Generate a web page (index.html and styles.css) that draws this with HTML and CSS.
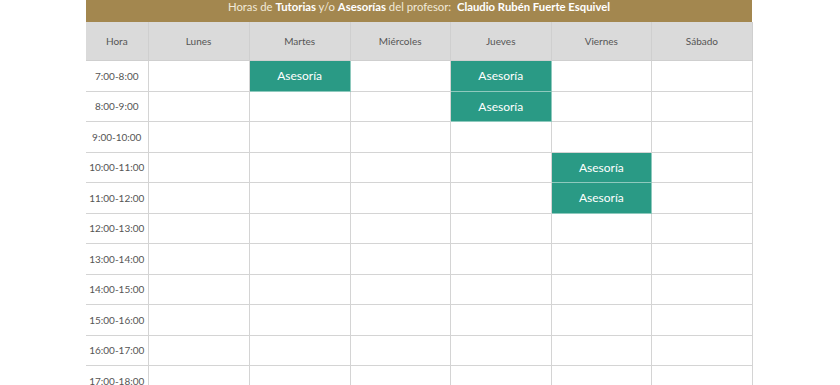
FILE: index.html
```html
<!DOCTYPE html>
<html lang="es">
<head>
<meta charset="utf-8">
<title>Horario</title>
<link rel="stylesheet" href="styles.css">
</head>
<body>
<div class="wrap">
  <div class="title">Horas de <b>Tutorias</b> y/o <b>Asesorías</b> del profesor: &nbsp;<b>Claudio Rubén Fuerte Esquivel</b></div>
  <table class="sched">
    <colgroup>
      <col class="c-hora"><col class="c-d1"><col class="c-d1"><col class="c-d2"><col class="c-d1"><col class="c-d2"><col class="c-d1">
    </colgroup>
    <thead>
      <tr><th>Hora</th><th>Lunes</th><th>Martes</th><th>Miércoles</th><th>Jueves</th><th>Viernes</th><th>Sábado</th></tr>
    </thead>
    <tbody>
      <tr><td class="h">7:00-8:00</td><td></td><td class="a">Asesoría</td><td></td><td class="a">Asesoría</td><td></td><td></td></tr>
      <tr><td class="h">8:00-9:00</td><td></td><td></td><td></td><td class="a">Asesoría</td><td></td><td></td></tr>
      <tr><td class="h">9:00-10:00</td><td></td><td></td><td></td><td></td><td></td><td></td></tr>
      <tr><td class="h">10:00-11:00</td><td></td><td></td><td></td><td></td><td class="a">Asesoría</td><td></td></tr>
      <tr><td class="h">11:00-12:00</td><td></td><td></td><td></td><td></td><td class="a">Asesoría</td><td></td></tr>
      <tr><td class="h">12:00-13:00</td><td></td><td></td><td></td><td></td><td></td><td></td></tr>
      <tr><td class="h">13:00-14:00</td><td></td><td></td><td></td><td></td><td></td><td></td></tr>
      <tr><td class="h">14:00-15:00</td><td></td><td></td><td></td><td></td><td></td><td></td></tr>
      <tr><td class="h">15:00-16:00</td><td></td><td></td><td></td><td></td><td></td><td></td></tr>
      <tr><td class="h">16:00-17:00</td><td></td><td></td><td></td><td></td><td></td><td></td></tr>
      <tr><td class="h">17:00-18:00</td><td></td><td></td><td></td><td></td><td></td><td></td></tr>
    </tbody>
  </table>
</div>
</body>
</html>
```
FILE: styles.css
```css
html, body {
  margin: 0;
  padding: 0;
  background: #ffffff;
}
body {
  font-family: Lato, "Open Sans", "Liberation Sans", sans-serif;
  color: #555555;
}
.wrap {
  width: 666px;
  margin-left: 86px;
}
.title {
  height: 22px;
  line-height: 14px;
  background: #a3874f;
  color: #f1e9d8;
  font-size: 11.3px;
  text-align: center;
  box-sizing: border-box;
  padding-bottom: 8px;
}
.title b {
  color: #ffffff;
  font-weight: 700;
}
.sched {
  width: 667px;
  border-collapse: collapse;
  table-layout: fixed;
  font-size: 10px;
}
.c-hora { width: 62px; }
.c-d1 { width: 101px; }
.c-d2 { width: 100px; }
.sched th {
  height: 38px;
  background: #dadada;
  font-weight: 400;
  color: #555555;
  border: 1px solid #cfcfcf;
  border-top: none;
  padding: 0;
}
.sched th:first-child,
.sched td:first-child {
  border-left: none;
}
.sched td {
  height: 29.5px;
  border: 1px solid #d4d4d4;
  padding: 0;
  text-align: center;
}
.sched td.h {
  color: #555555;
  font-size: 10px;
}
.sched td.a {
  background: #2a9a85;
  color: #ffffff;
  font-size: 12px;
  border-color: #8ec9bd;
}
```
